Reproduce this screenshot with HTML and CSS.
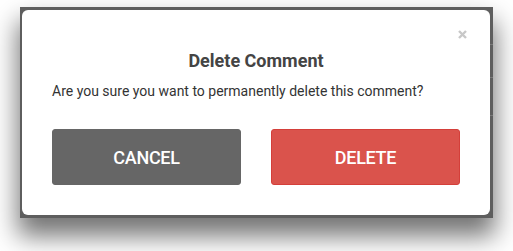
FILE: index.html
```html
<!DOCTYPE html>
<html>
<head>
<meta charset="utf-8">
<link rel="stylesheet" href="styles.css">
</head>
<body>
<div class="backdrop">
  <div class="rule r1"></div>
  <div class="rule r2"></div>
  <div class="rule r3"></div>
  <div class="dialog">
    <button class="close" aria-label="Close">
      <svg width="9" height="9" viewBox="0 0 9 9"><path d="M1 1L8 8M8 1L1 8" stroke="#c8c8c8" stroke-width="2.4" stroke-linecap="butt"/></svg>
    </button>
    <h2 class="title">Delete Comment</h2>
    <p class="message">Are you sure you want to permanently delete this comment?</p>
    <div class="actions">
      <button class="btn btn-cancel">CANCEL</button>
      <button class="btn btn-delete">DELETE</button>
    </div>
  </div>
</div>
</body>
</html>
```
FILE: styles.css
```css
html, body {
  margin: 0;
  padding: 0;
  background: #ffffff;
}
html { height: 251px; overflow: hidden; }
body {
  height: 251px;
  box-sizing: border-box;
  padding: 7px 20px 0 20px;
  font-family: Roboto, "Liberation Sans", sans-serif;
}
.backdrop {
  position: relative;
  width: 473px;
  height: 211px;
  background: #5e5e5e;
  box-shadow: 0 16px 24px 2px rgba(0, 0, 0, 0.55);
  padding: 3px 3px 3px 2px;
  box-sizing: border-box;
}
.rule {
  position: absolute;
  right: 0;
  width: 3px;
  height: 1px;
  background: #7a7a7a;
}
.r1 { top: 37px; }
.r2 { top: 70px; }
.r3 { top: 108px; }
.dialog {
  position: relative;
  height: 100%;
  background: #ffffff;
  border-radius: 6px;
  padding: 39px 30px 0 30px;
  box-sizing: border-box;
}
.close {
  position: absolute;
  top: 20px;
  right: 23px;
  border: 0;
  background: none;
  padding: 0;
  width: 9px;
  height: 9px;
  display: block;
}
.close svg { display: block; }
.title {
  margin: 0;
  text-align: center;
  font-size: 18px;
  font-weight: 700;
  color: #444444;
  line-height: 24px;
}
.message {
  margin: 8px 0 0 0;
  font-size: 14px;
  color: #333333;
  line-height: 20px;
}
.actions {
  display: flex;
  gap: 30px;
  margin-top: 28px;
}
.btn {
  flex: 1;
  height: 56px;
  border-radius: 3px;
  border: 1px solid transparent;
  color: #ffffff;
  font-family: Roboto, "Liberation Sans", sans-serif;
  font-size: 18px;
  font-weight: 500;
  letter-spacing: -0.3px;
  padding: 0;
}
.btn-cancel {
  background: #666666;
  border-color: #666666;
}
.btn-delete {
  background: #da534c;
  border-color: #d43f3a;
}
```
